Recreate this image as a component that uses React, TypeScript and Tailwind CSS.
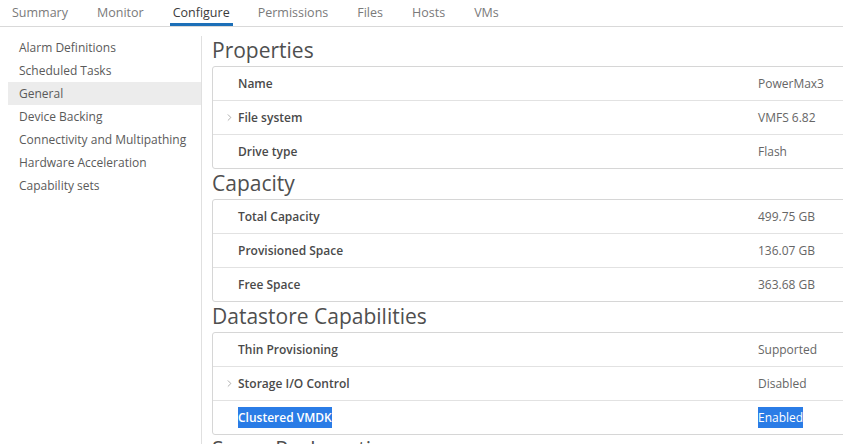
import { ChevronRight } from "lucide-react";

type Row = { label: string; value: string; expandable?: boolean; selected?: boolean };
type Section = { title: string; rows: Row[] };

const tabs = ["Summary", "Monitor", "Configure", "Permissions", "Files", "Hosts", "VMs"];

const navItems = [
  "Alarm Definitions",
  "Scheduled Tasks",
  "General",
  "Device Backing",
  "Connectivity and Multipathing",
  "Hardware Acceleration",
  "Capability sets",
];

const sections: Section[] = [
  {
    title: "Properties",
    rows: [
      { label: "Name", value: "PowerMax3" },
      { label: "File system", value: "VMFS 6.82", expandable: true },
      { label: "Drive type", value: "Flash" },
    ],
  },
  {
    title: "Capacity",
    rows: [
      { label: "Total Capacity", value: "499.75 GB" },
      { label: "Provisioned Space", value: "136.07 GB" },
      { label: "Free Space", value: "363.68 GB" },
    ],
  },
  {
    title: "Datastore Capabilities",
    rows: [
      { label: "Thin Provisioning", value: "Supported" },
      { label: "Storage I/O Control", value: "Disabled", expandable: true },
      { label: "Clustered VMDK", value: "Enabled", selected: true },
    ],
  },
];

const PropertyRow = ({ row }: { row: Row }) => (
  <div className="box-content flex h-[33px] items-center border-t border-[#e2e2e2] first:border-t-0">
    <div className="flex w-[545px] items-center pl-[7px]">
      <span className="flex w-[18px] justify-center text-[#8a8a8a]">
        {row.expandable && <ChevronRight size={11} strokeWidth={1.5} />}
      </span>
      <span
        className={`text-[12px] font-semibold ${
          row.selected ? "bg-[#2a7ce6] leading-[21px] text-white" : "text-[#4a4a4a]"
        }`}
      >
        {row.label}
      </span>
    </div>
    <span
      className={`text-[12px] ${
        row.selected ? "bg-[#2a7ce6] leading-[21px] text-white" : "text-[#666666]"
      }`}
    >
      {row.value}
    </span>
  </div>
);

export default function App() {
  return (
    <div
      className="h-[444px] w-[843px] overflow-hidden bg-white"
      style={{ fontFamily: '"Open Sans", "Liberation Sans", sans-serif' }}
    >
      {/* Tabs */}
      <div className="flex h-[27px] items-end border-b border-[#d9d9d9] pl-[12px]">
        {tabs.map((t) => (
          <div
            key={t}
            className={`h-[26px] pt-[4px] text-[12.5px] leading-[18px] ${
              t === "Configure"
                ? "-ml-[3px] mr-[25px] border-b-[3px] border-[#1c6fb8] px-[3px] text-[#3b3b3b]"
                : "mr-[29px] text-[#7a7a7a]"
            }`}
          >
            {t}
          </div>
        ))}
      </div>

      <div className="flex h-[417px]">
        {/* Left nav */}
        <div className="w-[202px] shrink-0 pl-[8px] pt-[9px]">
          <div className="h-full border-r border-[#e0e0e0]">
            {navItems.map((n) => (
              <div
                key={n}
                className={`h-[23px] pl-[11px] text-[12px] leading-[23px] text-[#5a5a5a] ${
                  n === "General" ? "bg-[#ececec]" : ""
                }`}
              >
                {n}
              </div>
            ))}
          </div>
        </div>

        {/* Main */}
        <div className="min-w-0 flex-1 overflow-hidden pl-[10px] pt-[9px]">
          {sections.map((s) => (
            <div key={s.title} className="w-[660px]">
              <h2 className="h-[30px] text-[21px] font-normal leading-[29px] text-[#4f4f4f]">
                {s.title}
              </h2>
              <div className="rounded-[3px] border border-[#d6d6d6]">
                {s.rows.map((r) => (
                  <PropertyRow key={r.label} row={r} />
                ))}
              </div>
            </div>
          ))}
          <h2 className="h-[30px] text-[21px] font-normal leading-[29px] text-[#4f4f4f]">
            Space Reclamation
          </h2>
        </div>
      </div>
    </div>
  );
}
